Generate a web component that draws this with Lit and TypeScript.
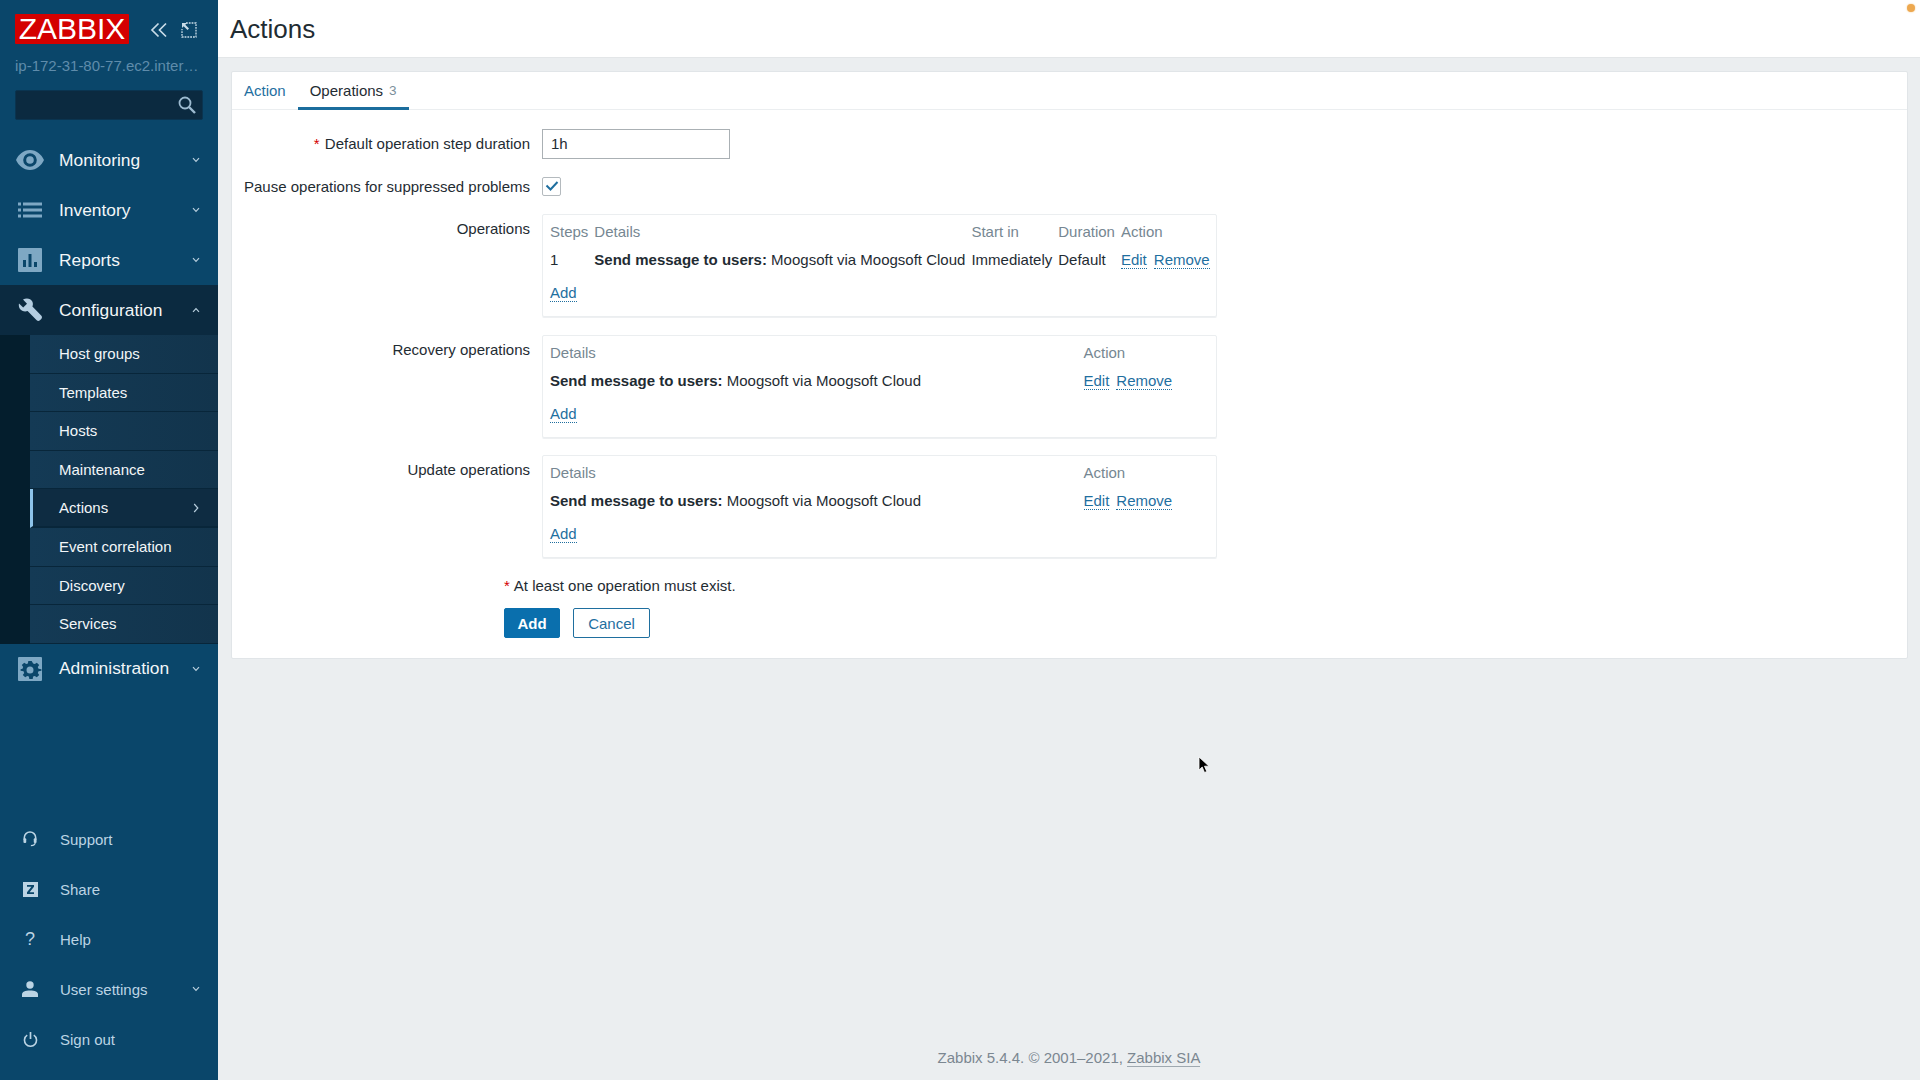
import { LitElement, html, css, svg } from "lit";
import { customElement } from "lit/decorators.js";

const chevDown = html`<svg class="chev" viewBox="0 0 8 6" width="8" height="6"><path d="M1 1.2 4 4.4 7 1.2" fill="none" stroke="currentColor" stroke-width="1.2"/></svg>`;
const chevUp = html`<svg class="chev" viewBox="0 0 8 6" width="8" height="6"><path d="M1 4.8 4 1.6 7 4.8" fill="none" stroke="currentColor" stroke-width="1.2"/></svg>`;
const chevRight = html`<svg class="chev" viewBox="0 0 8 10" width="8" height="10"><path d="M2.200 1 5.800 5 2.200 9" fill="none" stroke="currentColor" stroke-width="1.2"/></svg>`;

const eye = svg`<svg viewBox="0 0 28 20" width="28" height="20"><path fill-rule="evenodd" d="M14 0C7.5 0 2.6 4.5 0 10c2.6 5.5 7.5 10 14 10s11.400-4.500 14-10C25.400 4.500 20.500 0 14 0Zm0 3.200a6.800 6.800 0 1 1 0 13.600 6.800 6.800 0 0 1 0-13.600Zm0 3a3.800 3.800 0 1 0 0 7.600 3.800 3.800 0 0 0 0-7.600Z"/></svg>`;
const list = svg`<svg viewBox="0 0 24 16" width="24" height="16"><rect x="0" y="0.500" width="3" height="3"/><rect x="0" y="6.500" width="3" height="3"/><rect x="0" y="12.500" width="3" height="3"/><rect x="5" y="0.500" width="19" height="3"/><rect x="5" y="6.500" width="19" height="3"/><rect x="5" y="12.500" width="19" height="3"/></svg>`;
const bars = svg`<svg viewBox="0 0 24 24" width="24" height="24"><path fill-rule="evenodd" d="M1 0h22a1 1 0 0 1 1 1v22a1 1 0 0 1-1 1H1a1 1 0 0 1-1-1V1a1 1 0 0 1 1-1Zm4 12v7h3v-7H5Zm5.500-6v13h3V6h-3Zm5.500 8v5h3v-5h-3Z"/></svg>`;
const wrench = svg`<svg viewBox="0 0 24 24" width="24" height="24"><path d="M1 5.500 5.200 9.600 9 5.800 5 1.500C8.500-.6 12.800.4 14.300 3.500c.8 1.700.8 3.400.1 4.900l9 9.300c.8.9.8 2.300-.1 3.200l-1.400 1.400c-.9.900-2.300.9-3.200 0l-9.100-9.200c-1.800.7-3.700.6-5.400-.3C1.500 11.300.3 8.500 1 5.500Z"/></svg>`;
const gear = svg`<svg viewBox="0 0 24 24" width="24" height="24"><path fill-rule="evenodd" d="M1 0h22a1 1 0 0 1 1 1v22a1 1 0 0 1-1 1H1a1 1 0 0 1-1-1V1a1 1 0 0 1 1-1Zm9.300 4-.4 2.400-1.700.7-2-1.400-2.400 2.400 1.400 2-.7 1.700L2.600 12.200v1.600l2.900.4.700 1.700-1.400 2 2.400 2.400 2-1.400 1.700.7.400 2.400h3.400l.4-2.400 1.700-.7 2 1.400 2.400-2.400-1.400-2 .7-1.700 2.900-.4v-1.600l-2.900-.4-.7-1.700 1.400-2-2.400-2.400-2 1.400-1.700-.7L13.700 4h-3.400ZM12 9.500a3.500 3.500 0 1 1 0 7 3.500 3.500 0 0 1 0-7Z"/></svg>`;
const headset = svg`<svg viewBox="0 0 16 18" width="14" height="16"><path d="M1.500 9.500V7.500a6.500 6.500 0 0 1 13 0v2" fill="none" stroke="currentColor" stroke-width="1.800"/><rect x="0.500" y="8" width="3.200" height="5.500" rx="1.200"/><rect x="12.300" y="8" width="3.200" height="5.500" rx="1.200"/><path d="M14 13c0 2-1.500 3.500-5 3.500" fill="none" stroke="currentColor" stroke-width="1.300"/></svg>`;
const share = svg`<svg viewBox="0 0 15 15" width="15" height="15"><path fill-rule="evenodd" d="M0 0h15v15H0V0Zm4 3v1.700h4.400L4 10.300V12h7v-1.700H6.600L11 4.700V3H4Z"/></svg>`;
const user = svg`<svg viewBox="0 0 16 16" width="16" height="16"><circle cx="8" cy="4" r="3.700"/><path d="M0 16v-2.500C0 10.800 3 9.500 8 9.500s8 1.300 8 4V16H0Z"/></svg>`;
const power = svg`<svg viewBox="0 0 16 16" width="15" height="15"><path d="M4.500 3.400a6.400 6.400 0 1 0 7 0" fill="none" stroke="currentColor" stroke-width="1.700"/><path d="M8 0v7.500" fill="none" stroke="currentColor" stroke-width="1.800"/></svg>`;

const MAIN_TOP = [
  { label: "Monitoring", icon: eye },
  { label: "Inventory", icon: list },
  { label: "Reports", icon: bars },
];
const SUB = ["Host groups", "Templates", "Hosts", "Maintenance", "Actions", "Event correlation", "Discovery", "Services"];
const BOTTOM = [
  { label: "Support", icon: headset },
  { label: "Share", icon: share },
  { label: "Help", icon: html`<span class="qmark">?</span>` },
  { label: "User settings", icon: user, chev: true },
  { label: "Sign out", icon: power },
];

@customElement("app-root")
export class AppRoot extends LitElement {
  static styles = css`
    :host { display: block; width: 1920px; height: 1080px; overflow: hidden; font-family: "Liberation Sans", Arial, sans-serif; font-size: 15px; color: #1f2c33; }
    * { box-sizing: border-box; }
    .app { display: flex; height: 1080px; position: relative; background: #ebeef0; }

    .side { width: 218px; flex: none; background: #0a466a; display: flex; flex-direction: column; color: #f2f6f8; }
    .brand { display: flex; align-items: center; padding: 14px 0 0 15px; height: 44px; }
    .logo { width: 114px; height: 30px; background: #d40000; color: #fff; font-size: 30px; line-height: 30px; text-align: center; border-radius: 1px; }
    .brand-btns { display: flex; align-items: center; margin: 1px 0 0 21px; gap: 13px; color: #c9dce8; }
    .host { margin: 13px 15px 0; color: #5f8cab; line-height: 17px; white-space: nowrap; overflow: hidden; text-overflow: ellipsis; width: 184px; }
    .search { margin: 16px 15px 0; width: 188px; height: 30px; background: #0b2a40; border: 1px solid #0a3450; border-radius: 2px; display: flex; align-items: center; justify-content: flex-end; padding-right: 5px; color: #9dbbd0; }
    .nav { margin-top: 15px; }
    .item { height: 50px; display: flex; align-items: center; padding: 0 18px 0 0; font-size: 17.4px; cursor: pointer; }
    .item .ico { width: 59px; flex: none; display: flex; justify-content: center; fill: #7ea8c4; color: #7ea8c4; padding-left: 1px; }
    .item .lbl { flex: 1; }
    .chev { color: #b7cedd; flex: none; }
    .item.open { background: #0b2a40; }
    .item.open .ico { fill: #b4cde0; }
    .sub { display: flex; background: #041e2d; padding-left: 30px; }
    .sub-list { flex: 1; }
    .sub-item { height: 38.600px; display: flex; align-items: center; padding: 0 18px 0 29px; background: linear-gradient(90deg, #143a55, #12344c); border-bottom: 1px solid #08263a; color: #f2f6f8; }
    .sub-item .lbl { flex: 1; }
    .sub-item.sel { background: #0e2c42; border-left: 3px solid #8ec4ea; padding-left: 26px; border-bottom: 2px solid #08263a; }
    .spacer { flex: 1; }
    .bottom { padding-bottom: 16px; }
    .b-item { height: 50px; display: flex; align-items: center; padding: 0 18px 0 0; color: #bcd4e4; }
    .b-item .ico { width: 60px; flex: none; display: flex; justify-content: center; fill: #bcd4e4; color: #bcd4e4; }
    .b-item .lbl { flex: 1; }
    .qmark { font-size: 18px; line-height: 18px; color: #bcd4e4; }

    .main { flex: 1; min-width: 0; display: flex; flex-direction: column; }
    .head { height: 58px; background: #fff; border-bottom: 1px solid #e3e6e8; padding: 2px 0 0 12px; display: flex; align-items: center; flex: none; }
    h1 { margin: 0; font-weight: normal; font-size: 26px; color: #1f2c33; }
    .card { margin: 13px 12px 0 13px; background: #fff; border: 1px solid #e1e5e8; border-radius: 2px; padding-bottom: 20px; }
    .tabs { height: 38px; display: flex; border-bottom: 1px solid #ebeef0; }
    .tab { padding: 0 12px 2px; height: 38px; display: flex; align-items: center; color: #1f6f9f; }
    .tab.active { color: #1f2c33; border-bottom: 3px solid #1b6d9d; padding: 1px 12px 0; }
    .tab .n { color: #7b8f9b; margin-left: 6px; font-size: 13.500px; }
    .form { display: grid; grid-template-columns: 298px 1fr; column-gap: 12px; row-gap: 17.500px; padding-top: 19px; }
    .lab { text-align: right; line-height: 30px; white-space: nowrap; }
    .lab.chk { line-height: 19px; }
    .req { color: #d40000; margin-right: 1px; }
    input { display: block; width: 188px; height: 30px; border: 1px solid #aab0b4; padding: 0 8px 1px; font: inherit; color: #1f2c33; border-radius: 0; background: #fff; outline: none; }
    .check-cell { height: 20px; }
    .check { width: 19px; height: 19px; border: 1px solid #b4babe; border-radius: 2px; display: flex; align-items: center; justify-content: center; color: #1f6f9f; }
    .box { width: 675px; border: 1px solid #ebeef0; border-radius: 2px; padding: 6px 7px 0; height: 103px; box-shadow: 0 1px 0 #eef0f2; }
    table { border-collapse: collapse; width: 100%; }
    th { text-align: left; font-weight: normal; color: #768792; padding: 0 6px 0 0; height: 21px; white-space: nowrap; }
    td { padding: 6px 6px 5px 0; height: 34px; white-space: nowrap; vertical-align: middle; }
    th:last-child, td:last-child { padding-right: 0; }
    .act { width: 0; }
    .act2 { width: 125.500px; }
    .first { width: 43px; }
    a { color: #1f6f9f; text-decoration: none; border-bottom: 1px dotted #1f6f9f; cursor: pointer; }
    td a + a { margin-left: 7px; }
    .add { display: inline-block; line-height: 16px; margin-top: 9px; }
    .note { padding: 12px 0 0 272px; line-height: 17px; margin-top: 7px; }
    .note .req { margin-right: 4px; }
    .btns { display: flex; gap: 13px; padding: 14px 0 0 272px; }
    button { font: inherit; height: 30px; border-radius: 2px; padding: 0; cursor: pointer; }
    .prim { width: 56px; background: #0a6fad; color: #fff; border: 1px solid #0a6fad; font-weight: bold; }
    .sec { width: 77px; background: #fff; color: #1f6f9f; border: 1px solid #1f6f9f; }
    .foot { margin-top: auto; text-align: center; color: #7b8791; padding-bottom: 14px; line-height: 17px; }
    .foot a { color: #7b8791; border-bottom: 1px solid #9fa9b0; }
    .dot { position: absolute; top: 4px; right: 5px; width: 8px; height: 8px; border-radius: 50%; background: #eda84f; box-shadow: 0 0 2px #f3c98e; }
    .cursor { position: absolute; left: 1198px; top: 756px; }
  `;

  private row(l: string, i: unknown, open = false) {
    return html`<div class="item ${open ? "open" : ""}"><span class="ico">${i}</span><span class="lbl">${l}</span>${open ? chevUp : chevDown}</div>`;
  }

  private simpleBox() {
    return html`<div class="box">
      <table>
        <tr><th>Details</th><th class="act2">Action</th></tr>
        <tr><td><b>Send message to users:</b> Moogsoft via Moogsoft Cloud</td><td><a>Edit</a><a>Remove</a></td></tr>
      </table>
      <a class="add">Add</a>
    </div>`;
  }

  render() {
    return html`<div class="app">
      <aside class="side">
        <div class="brand">
          <div class="logo">ZABBIX</div>
          <div class="brand-btns">
            <svg viewBox="0 0 18 16" width="18" height="16"><path d="M8.500 1.500 2 8l6.500 6.500M16 1.500 9.500 8l6.500 6.500" fill="none" stroke="currentColor" stroke-width="1.700"/></svg>
            <svg viewBox="0 0 16 16" width="16" height="16"><path d="M5 1h10v14H1V7" fill="none" stroke="currentColor" stroke-width="1.300" stroke-dasharray="1.800 1"/><path d="M1 1h5L4.300 2.700 8 6.500 6.500 8 2.700 4.300 1 6V1Z" fill="currentColor"/></svg>
          </div>
        </div>
        <div class="host">ip-172-31-80-77.ec2.internal</div>
        <div class="search">
          <svg viewBox="0 0 20 20" width="20" height="20"><circle cx="8" cy="8" r="5.500" fill="none" stroke="currentColor" stroke-width="1.800"/><path d="m12 12 6 6" stroke="currentColor" stroke-width="2.400" fill="none"/></svg>
        </div>
        <nav class="nav">
          ${MAIN_TOP.map((m) => this.row(m.label, m.icon))}
          ${this.row("Configuration", wrench, true)}
          <div class="sub"><div class="sub-list">
            ${SUB.map((s) => html`<div class="sub-item ${s === "Actions" ? "sel" : ""}"><span class="lbl">${s}</span>${s === "Actions" ? chevRight : ""}</div>`)}
          </div></div>
          ${this.row("Administration", gear)}
        </nav>
        <div class="spacer"></div>
        <div class="bottom">
          ${BOTTOM.map((b) => html`<div class="b-item"><span class="ico">${b.icon}</span><span class="lbl">${b.label}</span>${b.chev ? chevDown : ""}</div>`)}
        </div>
      </aside>
      <main class="main">
        <header class="head"><h1>Actions</h1></header>
        <section class="card">
          <div class="tabs">
            <div class="tab">Action</div>
            <div class="tab active">Operations<span class="n">3</span></div>
          </div>
          <div class="form">
            <div class="lab"><span class="req">*</span> Default operation step duration</div>
            <div><input value="1h" /></div>
            <div class="lab chk">Pause operations for suppressed problems</div>
            <div class="check-cell"><div class="check"><svg viewBox="0 0 14 12" width="14" height="12"><path d="M1.500 5.500 5.500 9.500 12.500 2" fill="none" stroke="currentColor" stroke-width="2"/></svg></div></div>
            <div class="lab">Operations</div>
            <div class="box">
              <table>
                <tr><th class="first">Steps</th><th>Details</th><th>Start in</th><th>Duration</th><th class="act">Action</th></tr>
                <tr><td>1</td><td><b>Send message to users:</b> Moogsoft via Moogsoft Cloud</td><td>Immediately</td><td>Default</td><td class="act"><a>Edit</a><a>Remove</a></td></tr>
              </table>
              <a class="add">Add</a>
            </div>
            <div class="lab">Recovery operations</div>
            ${this.simpleBox()}
            <div class="lab">Update operations</div>
            ${this.simpleBox()}
          </div>
          <div class="note"><span class="req">*</span>At least one operation must exist.</div>
          <div class="btns"><button class="prim">Add</button><button class="sec">Cancel</button></div>
        </section>
        <footer class="foot">Zabbix 5.4.4. © 2001–2021, <a>Zabbix SIA</a></footer>
      </main>
      <div class="dot"></div>
      <svg class="cursor" viewBox="0 0 12 18" width="12" height="18"><path d="M1 1v13l3.200-3 2.300 5.500 2.300-1-2.300-5.300H11L1 1Z" fill="#000" stroke="#fff" stroke-width="0.800"/></svg>
    </div>`;
  }
}
